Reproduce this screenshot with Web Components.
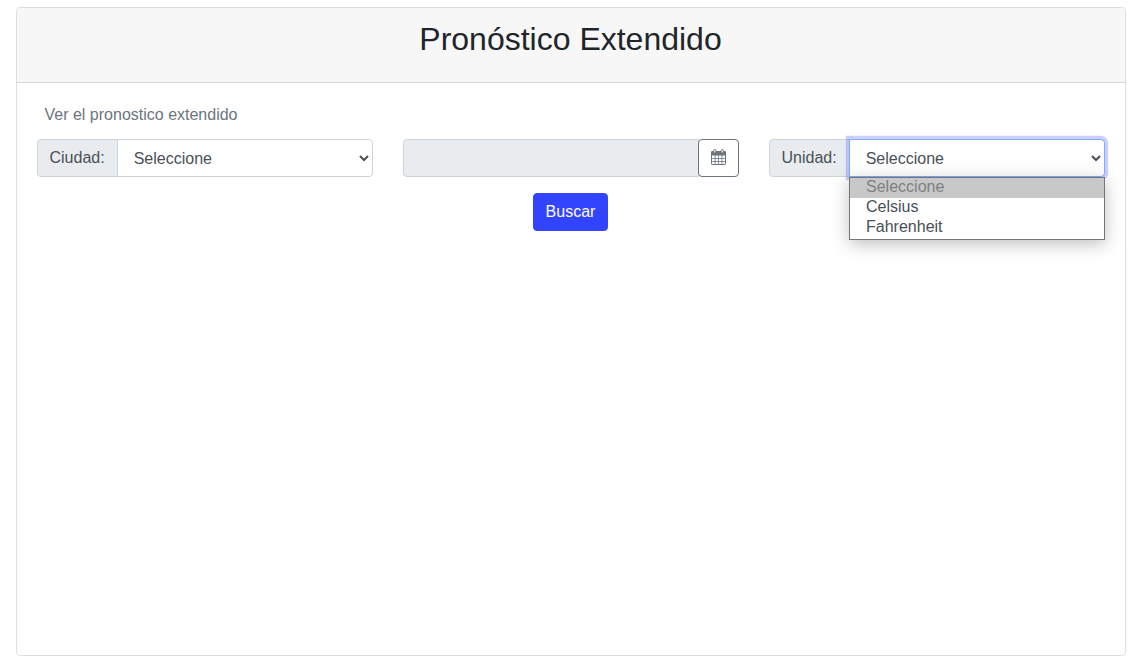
<!DOCTYPE html>
<html lang="es">
<head>
<meta charset="utf-8">
<title>Pronóstico Extendido</title>
<style>
html,body{margin:0;background:#fff}
body{font:16px/1.5 "Liberation Sans",Arial,sans-serif;color:#212529;padding:7px 16.5px 0 15.5px;height:661px;box-sizing:border-box;overflow:hidden}
</style>
</head>
<body>
<forecast-card>
  <span slot="title">Pronóstico Extendido</span>
  <span slot="hint">Ver el pronostico extendido</span>
  <select-group label="Ciudad:"></select-group>
  <date-field></date-field>
  <select-group label="Unidad:" open options="Celsius,Fahrenheit"></select-group>
  <primary-button slot="actions">Buscar</primary-button>
</forecast-card>
<script>
const define = (name, html, setup) => customElements.define(name, class extends HTMLElement {
  constructor() {
    super();
    this.attachShadow({mode: 'open'}).innerHTML = '<style>*{box-sizing:border-box}:host{box-sizing:border-box}</style>' + html;
  }
  connectedCallback() { if (setup) setup(this, this.shadowRoot); }
});

define('forecast-card', `
<style>
:host{display:flex;flex-direction:column;height:649px;border:1px solid #dfdfdf;border-radius:4px;background:#fff}
header{height:75px;padding:12px 20px;background:#f7f7f7;border-bottom:1px solid #d9d9d9;border-radius:3px 3px 0 0}
h2{margin:0;font-size:32px;font-weight:500;line-height:38.4px;text-align:center}
main{padding:20px}
.hint{margin:0 0 12px;padding-left:8px;line-height:24px;color:#6c757d}
.row{display:grid;grid-template-columns:repeat(3,336px);gap:30px}
.actions{display:flex;justify-content:center;margin-top:16px}
</style>
<header><h2><slot name="title"></slot></h2></header>
<main>
  <p class="hint"><slot name="hint"></slot></p>
  <div class="row"><slot></slot></div>
  <div class="actions"><slot name="actions"></slot></div>
</main>`);

define('select-group', `
<style>
:host{display:flex;position:relative;height:38px}
.label{padding:6px 12px;line-height:24px;color:#495057;background:#e9ecef;border:1px solid #ced4da;border-radius:4px 0 0 4px;white-space:nowrap}
.control{position:relative;flex:1;min-width:0;margin-left:-1px}
select{display:block;width:100%;height:38px;margin:0;padding:6px 12px;font:inherit;line-height:24px;color:#495057;background:#fff;border:1px solid #ced4da;border-radius:0 4px 4px 0;outline:0}
:host([open]) select{border-color:#80acff;box-shadow:0 0 0 3.2px rgba(51,68,255,.25)}
.menu{position:absolute;top:38px;left:0;right:0;height:63px;border:1px solid #767676;background:#fff;color:#495057;box-shadow:0 4px 16px rgba(0,0,0,.25);line-height:20px}
.menu div{height:20px;padding-left:16.4px;line-height:18px}
.menu .current{background:#c8c8c8;color:#808080}
</style>
<span class="label"></span>
<div class="control"><select><option>Seleccione</option></select></div>`, (host, root) => {
  root.querySelector('.label').textContent = host.getAttribute('label');
  if (!host.hasAttribute('open')) return;
  const menu = document.createElement('div');
  menu.className = 'menu';
  ['Seleccione', ...host.getAttribute('options').split(',')].forEach((text, i) => {
    const item = document.createElement('div');
    item.textContent = text;
    if (i === 0) item.className = 'current';
    menu.append(item);
  });
  root.querySelector('.control').append(menu);
});

define('date-field', `
<style>
:host{display:flex;height:38px}
.input{flex:1;background:#e9ecef;border:1px solid #ced4da;border-radius:4px 0 0 4px}
button{display:flex;align-items:center;justify-content:center;width:41px;height:38px;margin:0 0 0 -1px;padding:0 0 2px 1px;border:1px solid #6c757d;border-radius:4px;background:#fff;color:#6c757d}
svg{display:block;width:15px;height:16px}
</style>
<div class="input"></div>
<button type="button" aria-label="Calendario"><svg viewBox="0 0 15 16" fill="none" stroke="currentColor">
<rect x=".5" y="2.5" width="14" height="13" rx=".6"/>
<path d="M0 2.6h15v3.9h-15z" fill="currentColor" stroke="none"/>
<path d="M4.1 6v9M7.5 6v9M10.9 6v9M1 9.5h13M1 12.5h13" stroke-width=".8"/>
<rect x="2.7" y=".5" width="2.2" height="3.6" rx="1.1" fill="#fff"/>
<rect x="10.1" y=".5" width="2.2" height="3.6" rx="1.1" fill="#fff"/>
</svg></button>`);

define('primary-button', `
<style>
:host{display:block}
button{display:block;height:38px;margin:0;padding:6px 12px;border:1px solid #34f;border-radius:4px;background:#34f;color:#fff;font:inherit;line-height:24px}
</style>
<button type="button"><slot></slot></button>`);
</script>
</body>
</html>
